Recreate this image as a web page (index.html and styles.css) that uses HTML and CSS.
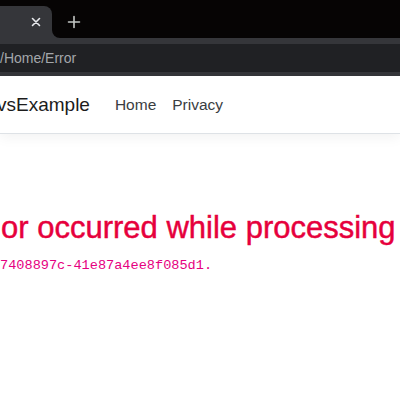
FILE: index.html
```html
<!DOCTYPE html>
<html lang="en">
<head>
  <meta charset="UTF-8">
  <title>Error</title>
  <meta name="viewport" content="width=device-width, initial-scale=1.0">
  <link rel="stylesheet" href="styles.css">
</head>
<body>

  <div class="tabstrip">
    <div class="tab">
      <svg class="tab-close" width="10" height="10" viewBox="0 0 10 10">
        <path d="M1.5 1.5 L8.5 8.5 M8.5 1.5 L1.5 8.5" stroke="#e8eaed" stroke-width="1.6" stroke-linecap="round"/>
      </svg>
    </div>
    <div class="tab-rest">
      <div class="tab-rest-fill">
        <svg class="new-tab" width="14" height="14" viewBox="0 0 14 14">
          <path d="M7 1.5 V12.5 M1.5 7 H12.5" stroke="#c4c7c5" stroke-width="1.6" stroke-linecap="round"/>
        </svg>
      </div>
    </div>
  </div>

  <div class="toolbar">
    <div class="omnibox">/Home/Error</div>
  </div>

  <header class="navbar">
    <a class="brand" href="#">vsExample</a>
    <nav class="nav-links">
      <a href="#">Home</a>
      <a href="#">Privacy</a>
    </nav>
  </header>

  <main class="content">
    <h2 class="text-danger">or occurred while processing your request.</h2>
    <p class="request-id"><code>7408897c-41e87a4ee8f085d1.</code></p>
  </main>

</body>
</html>
```

FILE: styles.css
```css
* {
  box-sizing: border-box;
}

body {
  margin: 0;
  background: #ffffff;
  font-family: 'Liberation Sans', Arial, sans-serif;
  overflow: hidden;
  white-space: nowrap;
}

/* browser chrome */
.tabstrip {
  display: flex;
  height: 38px;
  background: #060404;
}

.tab {
  width: 52px;
  margin-top: 6px;
  background: #35363a;
  border-radius: 0 8px 0 0;
  display: flex;
  justify-content: flex-end;
  padding: 11px 11px 0 0;
}

.tab-rest {
  flex: 1;
  background: #35363a;
}

.tab-rest-fill {
  height: 100%;
  background: #060404;
  border-radius: 0 0 0 8px;
  padding: 15px 0 0 15px;
}

.new-tab {
  display: block;
}

.toolbar {
  background: #35363a;
  padding: 6px 0 4px;
}

.omnibox {
  height: 28px;
  background: #202124;
  color: #a4a7ab;
  font-size: 14px;
  line-height: 28px;
}

/* page */
.navbar {
  display: flex;
  align-items: center;
  height: 58px;
  border-bottom: 1px solid #dee2e6;
  box-shadow: 0 4px 12px rgba(0, 0, 0, 0.05);
}

.brand {
  margin-left: -3px;
  font-size: 19px;
  color: #1c1c1c;
  text-decoration: none;
}

.nav-links {
  display: flex;
  gap: 16px;
  margin-left: 25px;
}

.nav-links a {
  font-size: 15.5px;
  color: #3a3d41;
  text-decoration: none;
}

.content {
  padding-top: 75px;
}

.text-danger {
  margin: 0 0 6px 1px;
  font-size: 31px;
  font-weight: 400;
  line-height: 1.2;
  color: #e6003c;
  -webkit-text-stroke: 0.45px #e6003c;
}

.request-id {
  margin: 0;
  font-size: 16px;
  line-height: 24px;
}

code {
  font-family: 'Liberation Mono', monospace;
  font-size: 13.6px;
  color: #e6007f;
}
```
